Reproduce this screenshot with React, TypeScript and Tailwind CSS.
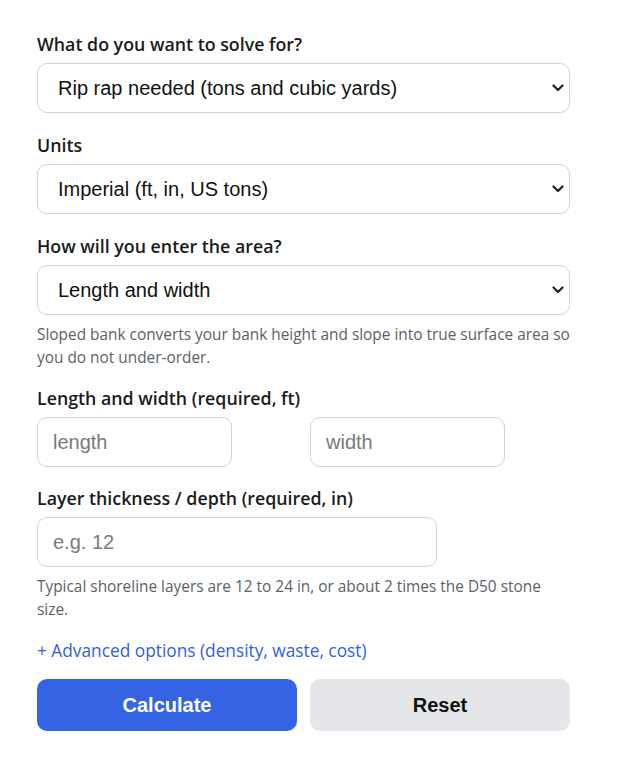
import React from "react";

const label = "block text-[17.8px] font-semibold text-[#1b1b1b] leading-[22px] mb-[8px]";
const field =
  "h-[50px] rounded-[10px] border border-[#cfd3da] bg-white text-[20px] text-[#111] font-['Liberation_Sans',Arial,sans-serif] placeholder:text-[#7a7a7a] outline-none";
const help = "mt-[8px] text-[15.4px] leading-[23px] text-[#5b6169]";

function Chevron() {
  return (
    <svg width="12" height="8" viewBox="0 0 12 8" className="absolute right-[6px] top-[21px]">
      <path d="M1.5 1.5 L6 6 L10.5 1.5" fill="none" stroke="#222" strokeWidth="2.2" strokeLinecap="round" strokeLinejoin="round" />
    </svg>
  );
}

function Select({ value }: { value: string }) {
  return (
    <div className="relative w-[533px]">
      <div className={`${field} px-[20px] flex items-center w-full`}>{value}</div>
      <Chevron />
    </div>
  );
}

export default function App() {
  return (
    <div className="min-h-screen bg-white font-['Open_Sans','Noto_Sans',sans-serif] pl-[37px] pt-[33px]">
      <div className="w-[533px] flex flex-col">
        <label className={label}>What do you want to solve for?</label>
        <Select value="Rip rap needed (tons and cubic yards)" />

        <label className={`${label} mt-[21px]`}>Units</label>
        <Select value="Imperial (ft, in, US tons)" />

        <label className={`${label} mt-[21px]`}>How will you enter the area?</label>
        <Select value="Length and width" />
        <p className={help}>
          Sloped bank converts your bank height and slope into true surface area so you do not under-order.
        </p>

        <label className={`${label} mt-[18px]`}>Length and width (required, ft)</label>
        <div className="flex gap-[78px]">
          <input className={`${field} px-[15px] w-[195px]`} placeholder="length" />
          <input className={`${field} px-[15px] w-[195px]`} placeholder="width" />
        </div>

        <label className={`${label} mt-[20px]`}>Layer thickness / depth (required, in)</label>
        <input className={`${field} px-[15px] w-[400px]`} placeholder="e.g. 12" />
        <p className={help}>
          Typical shoreline layers are 12 to 24 in, or about 2 times the D50 stone size.
        </p>

        <button className="mt-[19px] self-start text-[17.3px] font-medium text-[#2f5fe3] leading-[22px]">
          + Advanced options (density, waste, cost)
        </button>

        <div className="mt-[17px] flex gap-[13px]">
          <button className="h-[52px] w-[260px] rounded-[10px] bg-[#3464e4] text-white text-[20px] font-bold font-['Liberation_Sans',Arial,sans-serif]">
            Calculate
          </button>
          <button className="h-[52px] w-[260px] rounded-[10px] bg-[#e5e6ea] text-[#111] text-[20px] font-bold font-['Liberation_Sans',Arial,sans-serif]">
            Reset
          </button>
        </div>
      </div>
    </div>
  );
}
